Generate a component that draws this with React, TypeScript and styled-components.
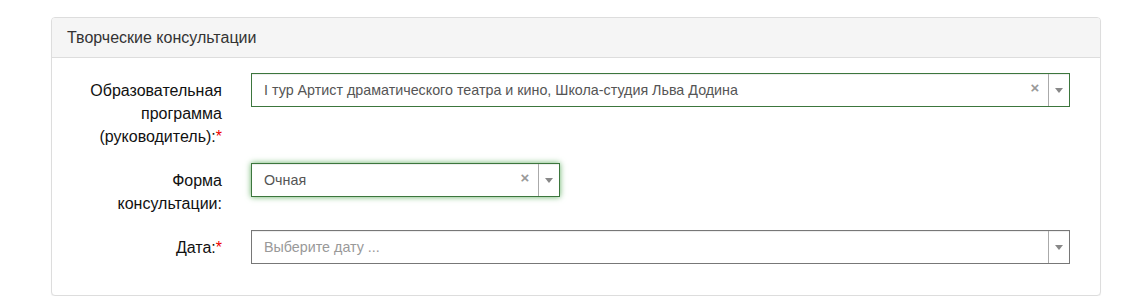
import styled, { createGlobalStyle } from 'styled-components';

const GlobalStyle = createGlobalStyle`
  html, body {
    margin: 0;
    padding: 0;
    background: #fff;
    font-family: 'Liberation Sans', Arial, sans-serif;
    color: #333;
  }
`;

const Page = styled.div`
  padding: 17px 40px 0 51px;
  width: 1050px;
`;

const Panel = styled.section`
  border: 1px solid #ddd;
  border-radius: 4px;
  background: #fff;
  box-shadow: 0 1px 1px rgba(0, 0, 0, 0.05);
`;

const PanelHeading = styled.div`
  background: #f5f5f5;
  border-bottom: 1px solid #ddd;
  border-radius: 3px 3px 0 0;
  padding: 10px 15px;
  font-size: 16px;
  line-height: 19px;
  color: #333;
`;

const PanelBody = styled.div`
  padding: 15px 30px 31px 15px;
  display: flex;
  flex-direction: column;
  gap: 15px;
`;

const FormGroup = styled.div`
  display: grid;
  grid-template-columns: 155px 1fr;
  column-gap: 29px;
`;

const Label = styled.label`
  text-align: right;
  font-size: 16px;
  line-height: 23px;
  padding-top: 6px;
  color: #111;
`;

const Req = styled.span`
  color: #e00;
`;

const Select = styled.div<{ $state: 'ok' | 'focus' | 'plain'; $width?: number }>`
  display: flex;
  align-items: stretch;
  height: 34px;
  box-sizing: border-box;
  width: ${(p) => (p.$width ? `${p.$width}px` : '100%')};
  border: 1px solid ${(p) => (p.$state === 'plain' ? '#777' : '#3c763d')};
  background: #fff;
  box-shadow: ${(p) =>
    p.$state === 'focus'
      ? 'inset 0 1px 1px rgba(0,0,0,.075), 0 0 6px #67b168'
      : 'inset 0 1px 1px rgba(0,0,0,.075)'};
`;

const Value = styled.div<{ $placeholder?: boolean }>`
  flex: 1;
  padding: 0 12px;
  display: flex;
  align-items: center;
  font-size: 14.3px;
  color: ${(p) => (p.$placeholder ? '#999' : '#555')};
  white-space: nowrap;
  overflow: hidden;
`;

const Clear = styled.span`
  width: 18px;
  display: flex;
  align-items: center;
  justify-content: center;
  color: #999;
  font-size: 15px;
  font-weight: bold;
  margin-right: 4px;
  padding-bottom: 6px;
`;

const Arrow = styled.span`
  width: 20px;
  border-left: 1px solid #aaa;
  display: flex;
  align-items: center;
  justify-content: center;
  &::after {
    content: '';
    border-left: 4px solid transparent;
    border-right: 4px solid transparent;
    border-top: 5px solid #888;
  }
`;

export default function App() {
  return (
    <>
      <GlobalStyle />
      <Page>
        <Panel>
          <PanelHeading>Творческие консультации</PanelHeading>
          <PanelBody>
            <FormGroup>
              <Label>
                Образовательная программа (руководитель):<Req>*</Req>
              </Label>
              <Select $state="ok">
                <Value>I тур Артист драматического театра и кино, Школа-студия Льва Додина</Value>
                <Clear>×</Clear>
                <Arrow />
              </Select>
            </FormGroup>
            <FormGroup>
              <Label>Форма консультации:</Label>
              <Select $state="focus" $width={309}>
                <Value>Очная</Value>
                <Clear>×</Clear>
                <Arrow />
              </Select>
            </FormGroup>
            <FormGroup>
              <Label>
                Дата:<Req>*</Req>
              </Label>
              <Select $state="plain">
                <Value $placeholder>Выберите дату ...</Value>
                <Arrow />
              </Select>
            </FormGroup>
          </PanelBody>
        </Panel>
      </Page>
    </>
  );
}
